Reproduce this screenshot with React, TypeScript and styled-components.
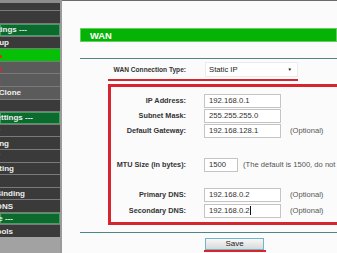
import React from 'react'
import styled, { createGlobalStyle, css } from 'styled-components'

const GlobalStyle = createGlobalStyle`
	html, body {
		margin: 0;
		padding: 0;
		background: #fbfbfb;
		font-family: "Liberation Sans", Arial, sans-serif;
	}
`

type Tone = 'dark' | 'gray' | 'section' | 'active'

interface MenuEntry {
	label: string
	tone: Tone
	end: number
	mark?: boolean
}

const menu: MenuEntry[] = [
	{ label: 'Status', tone: 'dark', end: -4 },
	{ label: '--- Basic Settings ---', tone: 'section', end: 27 },
	{ label: 'Quick Setup', tone: 'dark', end: 9 },
	{ label: 'Network', tone: 'active', end: -4, mark: true },
	{ label: '- WAN', tone: 'gray', end: -4, mark: true },
	{ label: '- LAN', tone: 'gray', end: -4 },
	{ label: '- MAC Clone', tone: 'gray', end: 21 },
	{ label: 'Wireless', tone: 'dark', end: -4 },
	{ label: '--- Advanced Settings ---', tone: 'section', end: 33 },
	{ label: 'DHCP', tone: 'dark', end: -4 },
	{ label: 'Forwarding', tone: 'dark', end: 9 },
	{ label: 'Security', tone: 'dark', end: -4 },
	{ label: 'Static Routing', tone: 'dark', end: 14 },
	{ label: 'Bandwidth Control', tone: 'dark', end: -4 },
	{ label: 'IP & MAC Binding', tone: 'dark', end: 25 },
	{ label: 'Dynamic DNS', tone: 'dark', end: 13 },
	{ label: '--- Maintenance ---', tone: 'section', end: 13 },
	{ label: 'System Tools', tone: 'dark', end: 13 },
]

const Page = styled.div`
	display: flex;
	width: 337px;
	height: 253px;
	overflow: hidden;
`

const Sidebar = styled.nav`
	width: 60px;
	flex-shrink: 0;
	display: flex;
	flex-direction: column;
	background: #a2a2a2;
	border-right: 2px solid #9a9a9a;
	overflow: hidden;
`

const TopBand = styled.div`
	height: 3px;
	background: #8c8c8c;
`

const tones = {
	dark: css`background: #3a3a3a;`,
	gray: css`background: #5b5b5b;`,
	section: css`
		background: #0b6a2d;
		box-shadow: inset 0 0 0 1px #4f9a62;
	`,
	active: css`background: #05c105;`,
}

const MenuRow = styled.div<{ $tone: Tone; $end: number; $mark?: boolean }>`
	position: relative;
	box-sizing: border-box;
	height: 12.6px;
	border-top: 1px solid #7a7a7a;
	display: flex;
	align-items: center;
	justify-content: flex-end;
	padding-right: ${p => 60 - p.$end}px;
	overflow: hidden;
	white-space: nowrap;
	color: #eeeeee;
	font-weight: bold;
	font-size: 8px;
	${p => tones[p.$tone]}

	${p => p.$mark && css`
		&::before {
			content: '';
			position: absolute;
			left: -1px;
			top: 6px;
			width: 3px;
			height: 3px;
			border-radius: 50%;
			background: #e3232b;
		}
	`}
`

const FirstRow = styled.div`
	height: 7.4px;
	background: #3a3a3a;
`

const Main = styled.main`
	flex: 1;
	display: flex;
	flex-direction: column;
	padding-left: 18px;
	border-top: 1px solid #6a6a6a;
	background: #fbfbfb;
	overflow: hidden;
`

const TitleBar = styled.div`
	margin-top: 27px;
	height: 14px;
	display: flex;
	align-items: center;
	padding-left: 10px;
	background: #05b305;
	box-shadow: inset 0 0 0 1px #63cf63;
	color: #fff;
	font-weight: bold;
	font-size: 9.4px;
`

const Rule = styled.div<{ $top: number }>`
	margin-top: ${p => p.$top}px;
	height: 1px;
	background: #4e8585;
`

const ConnRow = styled.div`
	margin-top: 3px;
	margin-left: 28px;
	width: 190px;
	display: flex;
	align-items: center;
	padding-bottom: 2px;
	border-bottom: 2.5px solid #d72530;
`

const Label = styled.div<{ $w: number; $size?: number }>`
	width: ${p => p.$w}px;
	flex-shrink: 0;
	text-align: right;
	font-weight: bold;
	font-size: ${p => p.$size ?? 7.3}px;
	color: #333;
	white-space: nowrap;
`

const Select = styled.div`
	margin-left: 19px;
	width: 93px;
	height: 15px;
	box-sizing: border-box;
	display: flex;
	align-items: center;
	justify-content: space-between;
	padding: 0 5px 0 3px;
	background: #fff;
	border: 1px solid #ececec;
	font-size: 7.7px;
	color: #222;
`

const Arrow = styled.span`
	font-size: 4.5px;
	color: #111;
`

const RedBox = styled.div`
	margin-top: 2.5px;
	margin-left: 28px;
	width: 250px;
	border: 3px solid #d72530;
	padding: 7px 0 4px;
	display: flex;
	flex-direction: column;
`

const FieldRow = styled.div<{ $top?: number; $gap?: number }>`
	display: flex;
	align-items: center;
	margin-top: ${p => p.$top ?? 0}px;
	margin-bottom: ${p => p.$gap ?? 1}px;
`

const Field = styled.div<{ $w: number }>`
	margin-left: 18px;
	width: ${p => p.$w}px;
	flex-shrink: 0;
	height: 14px;
	box-sizing: border-box;
	display: flex;
	align-items: center;
	padding-left: 4px;
	background: #fff;
	border: 1px solid #c4c4c4;
	font-size: 7.7px;
	color: #333;
	white-space: nowrap;
`

const Caret = styled.span`
	display: inline-block;
	width: 1px;
	height: 9px;
	background: #111;
`

const Hint = styled.span<{ $gap: number }>`
	margin-left: ${p => p.$gap}px;
	font-size: 7.6px;
	color: #555;
	white-space: nowrap;
`

const SaveWrap = styled.div`
	margin-top: 5px;
	margin-left: 124px;
	width: 61px;
	padding-left: 1px;
	border-bottom: 2.5px solid #d72530;
`

const SaveButton = styled.button`
	display: block;
	width: 59px;
	height: 12px;
	padding: 0;
	box-sizing: border-box;
	border: 1px solid #6fb6c9;
	background: linear-gradient(#f7f7f7, #d9d9d9);
	font-family: "Liberation Sans", Arial, sans-serif;
	font-size: 8px;
	line-height: 10px;
	color: #222;
`

export default function App() {
	return (
		<>
			<GlobalStyle />
			<Page>
				<Sidebar>
					<TopBand />
					<FirstRow />
					{menu.map(item => (
						<MenuRow key={item.label} $tone={item.tone} $end={item.end} $mark={item.mark}>
							{item.label}
						</MenuRow>
					))}
				</Sidebar>
				<Main>
					<TitleBar>WAN</TitleBar>
					<Rule $top={16} />
					<ConnRow>
						<Label $w={78} $size={6.6}>WAN Connection Type:</Label>
						<Select>
							<span>Static IP</span>
							<Arrow>▼</Arrow>
						</Select>
					</ConnRow>
					<RedBox>
						<FieldRow>
							<Label $w={75}>IP Address:</Label>
							<Field $w={77}>192.168.0.1</Field>
						</FieldRow>
						<FieldRow>
							<Label $w={75}>Subnet Mask:</Label>
							<Field $w={77}>255.255.255.0</Field>
						</FieldRow>
						<FieldRow>
							<Label $w={75}>Default Gateway:</Label>
							<Field $w={77}>192.168.128.1</Field>
							<Hint $gap={9}>(Optional)</Hint>
						</FieldRow>
						<FieldRow $top={19} $gap={16}>
							<Label $w={75}>MTU Size (in bytes):</Label>
							<Field $w={34}>1500</Field>
							<Hint $gap={5}>(The default is 1500, do not change unless necessary.)</Hint>
						</FieldRow>
						<FieldRow $gap={2}>
							<Label $w={75}>Primary DNS:</Label>
							<Field $w={77}>192.168.0.2</Field>
							<Hint $gap={9}>(Optional)</Hint>
						</FieldRow>
						<FieldRow $gap={0}>
							<Label $w={75}>Secondary DNS:</Label>
							<Field $w={77}>192.168.0.2<Caret /></Field>
							<Hint $gap={9}>(Optional)</Hint>
						</FieldRow>
					</RedBox>
					<Rule $top={7} />
					<SaveWrap>
						<SaveButton>Save</SaveButton>
					</SaveWrap>
				</Main>
			</Page>
		</>
	)
}
